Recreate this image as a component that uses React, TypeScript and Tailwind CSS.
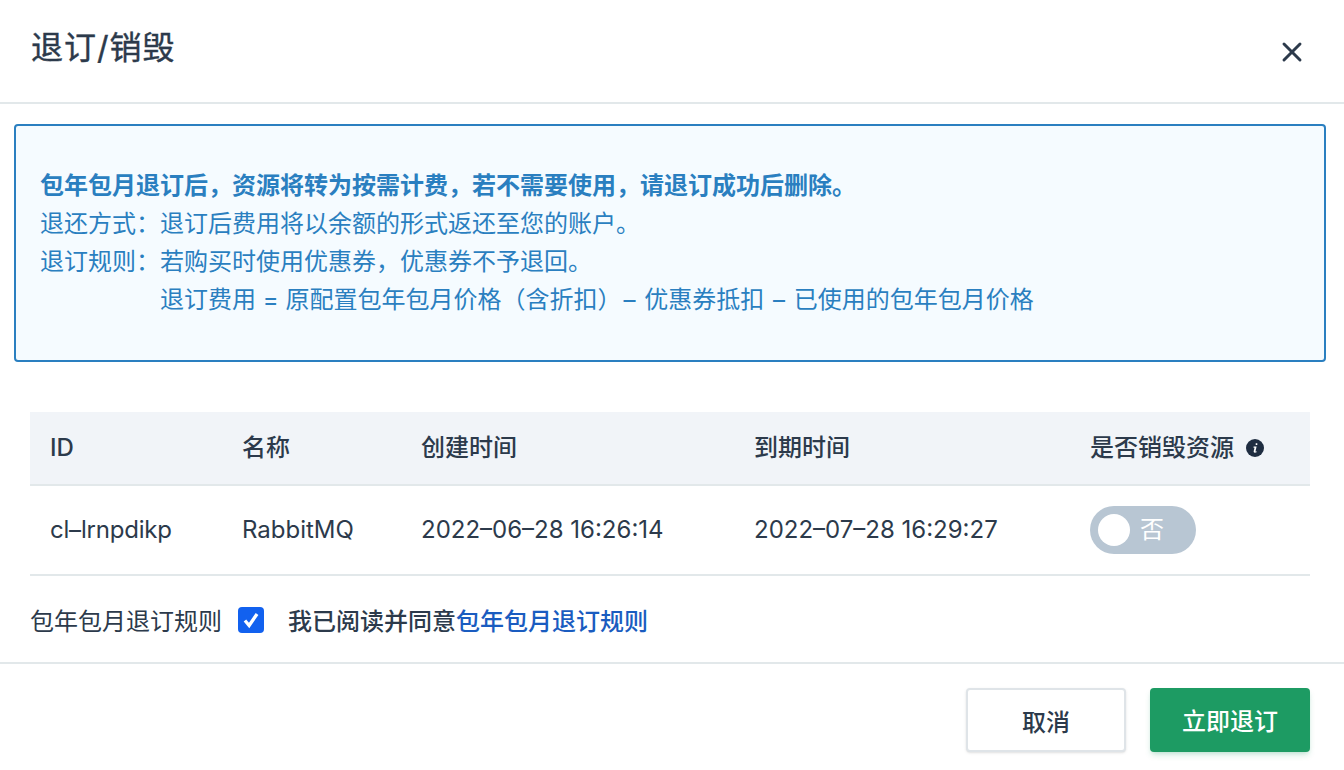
import { X } from 'lucide-react'

const columns = 'grid grid-cols-[192px_179px_333px_336px_1fr]'
const font = 'font-["Inter","Noto_Sans_CJK_SC",sans-serif]'

export default function App() {
  return (
    <div className={`flex h-[770px] w-[1344px] flex-col overflow-hidden bg-white text-[24px] text-[#2c3a4b] ${font}`}>
      <div className="flex h-[104px] items-center justify-between border-b-2 border-[#e2e8ea] pr-[36px] pl-[31px]">
        <h1 className="-mt-1.5 text-[32px] font-normal leading-[44px] tracking-[1px] [-webkit-text-stroke:0.4px_#2c3a4b]">退订/销毁</h1>
        <button className="mt-0.5 text-[#2c3a4b]">
          <X size={32} strokeWidth={2.2} />
        </button>
      </div>

      <div className="mr-[18px] ml-[14px] mt-5 flex h-[238px] flex-col justify-center rounded-[4px] border-2 border-[#2a7fc0] bg-[#f5fbff] pr-[25px] pl-6 leading-[38px] text-[#2a7fc0]">
        <p className="font-semibold">包年包月退订后，资源将转为按需计费，若不需要使用，请退订成功后删除。</p>
        <p>退还方式：退订后费用将以余额的形式返还至您的账户。</p>
        <p>退订规则：若购买时使用优惠券，优惠券不予退回。</p>
        <p className="pl-[120px]">
          退订费用 = 原配置包年包月价格（含折扣）<span className="mx-[2px]">–</span> 优惠券抵扣 <span className="mx-[2px]">–</span> 已使用的包年包月价格
        </p>
      </div>

      <div className="mr-[34px] ml-[30px] mt-[50px]">
        <div className={`${columns} h-[74px] items-center border-b-2 border-[#e2e8ea] bg-[#f1f4f8] pl-5 font-medium`}>
          <span>ID</span>
          <span>名称</span>
          <span>创建时间</span>
          <span>到期时间</span>
          <span className="flex items-center gap-3">
            是否销毁资源
            <svg viewBox="0 0 18 18" className="h-[18px] w-[18px]">
              <circle cx="9" cy="9" r="9" fill="#1f2d41" />
              <path d="M9.7 4.2h1.6v1.7H9.7zM7.6 7.6h3l-1.1 4.6c-.1.4.3.5 1.2.1l-.1.9c-1.8.8-3.2.5-2.9-.9l.8-3.6-1 .1z" fill="#fff" />
            </svg>
          </span>
        </div>
        <div className={`${columns} h-[90px] items-center border-b-2 border-[#e2e8ea] pl-5`}>
          <span className="tracking-[-0.2px]">cl–lrnpdikp</span>
          <span>RabbitMQ</span>
          <span>2022–06–28 16:26:14</span>
          <span>2022–07–28 16:29:27</span>
          <span className="flex h-12 w-[106px] items-center rounded-full bg-[#b8c6d3] pl-2 text-white">
            <span className="h-8 w-8 rounded-full bg-white" />
            <span className="ml-[10px]">否</span>
          </span>
        </div>
      </div>

      <div className="mr-[34px] ml-[30px] mt-[25px] flex h-[42px] items-center">
        <span>包年包月退订规则</span>
        <span className="ml-4 -mt-1 flex h-[26px] w-[26px] items-center justify-center rounded-[4px] bg-[#1261ef]">
          <svg viewBox="0 0 20 20" className="h-[22px] w-[22px]">
            <path d="M4.5 10.5 8.3 15 15.5 4.5" fill="none" stroke="#fff" strokeWidth="3" />
          </svg>
        </span>
        <span className="ml-6 font-medium">我已阅读并同意<a className="text-[#1a5cc0]">包年包月退订规则</a></span>
      </div>

      <div className="mt-[19px] flex flex-1 justify-end gap-6 border-t-2 border-[#e2e8ea] pt-6 pr-[34px]">
        <button className="h-16 w-40 rounded-[4px] border-2 border-[#dfe4e8] bg-white pt-1.5 font-medium shadow-sm">取消</button>
        <button className="h-16 w-40 rounded-[4px] bg-[#1d9b63] pt-1 font-medium text-white shadow-md shadow-[#1d9b63]/20">立即退订</button>
      </div>
    </div>
  )
}
